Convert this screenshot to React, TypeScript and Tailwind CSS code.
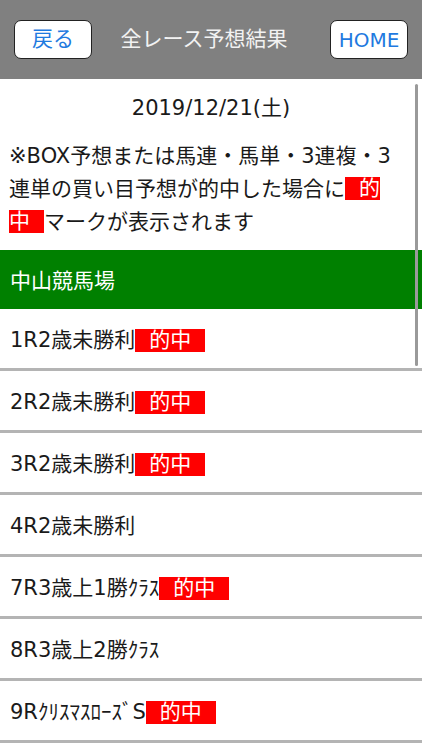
import React from 'react';

type Race = { label: string; hit: boolean };

const races: Race[] = [
  { label: '1R2歳未勝利', hit: true },
  { label: '2R2歳未勝利', hit: true },
  { label: '3R2歳未勝利', hit: true },
  { label: '4R2歳未勝利', hit: false },
  { label: '7R3歳上1勝ｸﾗｽ', hit: true },
  { label: '8R3歳上2勝ｸﾗｽ', hit: false },
  { label: '9RｸﾘｽﾏｽﾛｰｽﾞS', hit: true },
];

const font = "font-['DejaVu_Sans','Noto_Sans_CJK_JP',sans-serif]";

const Badge: React.FC<{ children: React.ReactNode; className?: string }> = ({ children, className = 'px-[14px]' }) => (
  <span className={`inline-block h-[23px] leading-[23px] align-[1px] bg-[#ff0000] text-white ${className}`}>
    {children}
  </span>
);

export default function App() {
  return (
    <div className={`relative w-[422px] h-[750px] overflow-hidden bg-white text-[21px] text-[#1a1a1a] ${font}`}>
      {/* Header */}
      <div className="h-[79px] bg-[#808080] flex items-center justify-between px-[14px]">
        <button className="w-[78px] h-[39px] rounded-[7px] border border-[#222] bg-white text-[#1f7ae0] text-[21px] leading-none">
          戻る
        </button>
        <div className="mr-[14px] text-[#f2f2f2] text-[21px]">全レース予想結果</div>
        <button className="w-[78px] h-[39px] rounded-[7px] border border-[#222] bg-white text-[#1f7ae0] text-[20px] leading-none">
          HOME
        </button>
      </div>

      {/* Date + notice */}
      <div className="pt-[13px] pb-[11px] px-[9px]">
        <div className="text-center leading-[33px]">2019/12/21(土)</div>
        <div className="mt-[15px] leading-[33px] whitespace-nowrap">
          <div>※BOX予想または馬連・馬単・3連複・3</div>
          <div>
            連単の買い目予想が的中した場合に<Badge className="pl-[14px]">的</Badge>
          </div>
          <div>
            <Badge className="pr-[14px]">中</Badge>マークが表示されます
          </div>
        </div>
      </div>

      {/* Course */}
      <div className="h-[59px] bg-[#008000] text-white flex items-center px-[10px] pt-[4px]">中山競馬場</div>

      {races.map((r) => (
        <div key={r.label} className="h-[62px] border-b-[3px] border-[#b4b4b4] flex items-center px-[10px] pt-[4px] whitespace-nowrap">
          <span>{r.label}</span>
          {r.hit && <Badge>的中</Badge>}
        </div>
      ))}

      {/* scroll indicator */}
      <div className="absolute left-[415px] top-[84px] w-[3px] h-[282px] rounded-full bg-[#9a9a9a]" />
    </div>
  );
}
